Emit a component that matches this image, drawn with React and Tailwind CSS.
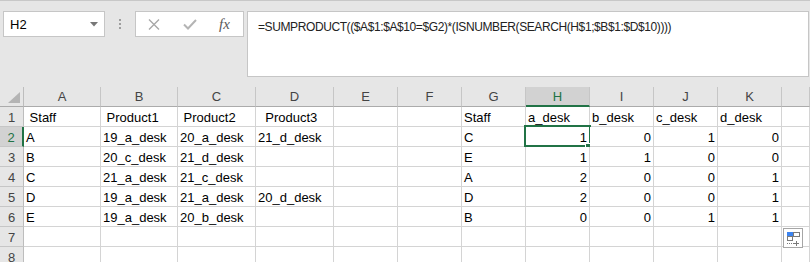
import React from "react";

const cols = ["A", "B", "C", "D", "E", "F", "G", "H", "I", "J", "K", ""];

// each row: 11 columns A..K (null = empty); numbers are right aligned
const rows = [
  [" Staff", " Product1", " Product2", "  Product3", null, null, "Staff", "a_desk", "b_desk", "c_desk", "d_desk"],
  ["A", "19_a_desk", "20_a_desk", "21_d_desk", null, null, "C", 1, 0, 1, 0],
  ["B", "20_c_desk", "21_d_desk", null, null, null, "E", 1, 1, 0, 0],
  ["C", "21_a_desk", "21_c_desk", null, null, null, "A", 2, 0, 0, 1],
  ["D", "19_a_desk", "21_a_desk", "20_d_desk", null, null, "D", 2, 0, 0, 1],
  ["E", "19_a_desk", "20_b_desk", null, null, null, "B", 0, 0, 1, 1],
  [],
  [],
];

const ColHeader = ({ label, active }) => (
  <div
    className={
      active
        ? "h-[20px] bg-[#d2d2d2] border-r border-r-[#c6c6c6] border-b-2 border-b-[#217346] text-[#217346] text-center pt-[2px] leading-[15px]"
        : "h-[20px] border-r border-r-[#c6c6c6] border-b border-b-[#ababab] text-[#444] text-center pt-[2px] leading-[15px]"
    }
  >
    {label}
  </div>
);

const RowHeader = ({ n, active }) => (
  <div
    className={
      active
        ? "h-[20px] bg-[#d2d2d2] border-r-2 border-r-[#217346] border-b border-b-[#c6c6c6] text-[#217346] text-center pt-[3px] leading-[15px]"
        : "h-[20px] border-r border-r-[#bdbdbd] border-b border-b-[#c6c6c6] text-[#444] text-center pt-[3px] leading-[15px]"
    }
  >
    {n}
  </div>
);

const Cell = ({ value, selected }) => {
  const isNum = typeof value === "number";
  return (
    <div
      className={
        isNum
          ? "relative h-[20px] bg-white border-r border-b border-[#d4d4d4] pt-[3px] leading-[15px] pr-[2px] text-right whitespace-pre"
          : "relative h-[20px] bg-white border-r border-b border-[#d4d4d4] pt-[3px] leading-[15px] pl-[2px] whitespace-pre overflow-hidden"
      }
    >
      {value}
      {selected && (
        <>
          <div className="absolute -left-[2px] -top-[2px] w-[67px] h-[22px] border-2 border-[#217346]" />
          <div className="absolute left-[59px] top-[16px] w-[7px] h-[7px] bg-[#217346] border border-white" />
        </>
      )}
    </div>
  );
};

export default function App() {
  return (
    <div className="relative w-[810px] h-[262px] overflow-hidden bg-[#e6e6e6] font-['Liberation_Sans',Arial,sans-serif] text-[13px] text-black">
      {/* formula bar */}
      <div className="h-[87px] border-t border-[#c8c8c8] flex items-start pt-[10px]">
        <div className="ml-[3px] w-[102px] h-[26px] bg-white border border-[#c6c6c6] flex items-center justify-between pl-[6px] pr-[6px]">
          <span className="pt-[1px]">H2</span>
          <svg width="8" height="5" viewBox="0 0 8 5">
            <path d="M0 0h8L4 4.5z" fill="#777" />
          </svg>
        </div>
        <div className="w-[30px] h-[26px] flex flex-col items-center justify-center gap-[2px]">
          <div className="w-[2px] h-[2px] bg-[#9e9e9e]" />
          <div className="w-[2px] h-[2px] bg-[#9e9e9e]" />
          <div className="w-[2px] h-[2px] bg-[#9e9e9e]" />
        </div>
        <div className="w-[109px] h-[26px] bg-white border border-[#c6c6c6] flex items-center">
          <svg className="ml-[12px]" width="12" height="11" viewBox="0 0 12 11">
            <path d="M1 0.5l10 10M11 0.5l-10 10" stroke="#a8a8a8" strokeWidth="1.4" fill="none" />
          </svg>
          <svg className="ml-[23px]" width="14" height="11" viewBox="0 0 14 11">
            <path d="M1 5.5l4 4 8-8.5" stroke="#b4b4b4" strokeWidth="2" fill="none" />
          </svg>
          <span className="ml-[22px] font-['Liberation_Serif',serif] italic text-[15px] text-[#5a5a5a] leading-none">
            fx
          </span>
        </div>
        <div className="ml-[3px] mr-[1px] flex-1 h-[66px] bg-white border border-[#c6c6c6] pl-[10px] pt-[8px] text-[12px] leading-[14px] tracking-[-0.4px] text-[#222]">
          =SUMPRODUCT(($A$1:$A$10=$G2)*(ISNUMBER(SEARCH(H$1;$B$1:$D$10))))
        </div>
      </div>

      {/* sheet grid */}
      <div className="relative grid grid-cols-[24px_77px_77px_78px_78px_64px_64px_64px_64px_64px_64px_64px_1fr]">
        <div className="relative h-[20px] border-r border-r-[#bdbdbd] border-b border-b-[#ababab]">
          <svg className="absolute left-[8px] top-[5px]" width="12" height="11" viewBox="0 0 12 11">
            <path d="M12 0v11H0z" fill="#b4b4b4" />
          </svg>
        </div>
        {cols.map((c, i) => (
          <ColHeader key={i} label={c} active={c === "H"} />
        ))}

        {rows.map((row, r) => (
          <React.Fragment key={r}>
            <RowHeader n={r + 1} active={r === 1} />
            {cols.map((c, ci) => (
              <Cell key={ci} value={row[ci] ?? null} selected={r === 1 && c === "H"} />
            ))}
          </React.Fragment>
        ))}

        {/* paste options button */}
        <div className="absolute left-[783px] top-[141px] w-[20px] h-[20px] bg-white border border-[#a6a6a6]">
          <svg width="18" height="18" viewBox="0 0 18 18">
            <rect x="3" y="3" width="6" height="4" fill="#3c84f0" />
            <rect x="9.5" y="3.5" width="6" height="4" fill="none" stroke="#7a7a7a" />
            <rect x="3.5" y="7.5" width="5" height="4" fill="none" stroke="#7a7a7a" />
            <path d="M3 14.5h1M5 14.5h1M7 14.5h1M9 14.5h1" stroke="#7a7a7a" />
            <path d="M12.5 12v5M10 14.5h5" stroke="#7a7a7a" />
          </svg>
        </div>
      </div>
    </div>
  );
}
